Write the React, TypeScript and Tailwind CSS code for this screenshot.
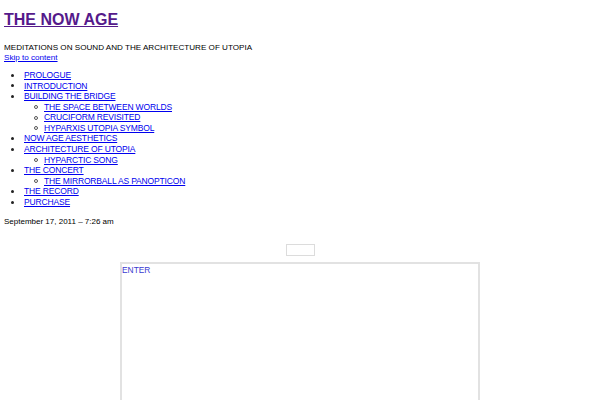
const nav: { label: string; children?: string[] }[] = [
  { label: "PROLOGUE" },
  { label: "INTRODUCTION" },
  {
    label: "BUILDING THE BRIDGE",
    children: ["THE SPACE BETWEEN WORLDS", "CRUCIFORM REVISITED", "HYPARXIS UTOPIA SYMBOL"],
  },
  { label: "NOW AGE AESTHETICS" },
  { label: "ARCHITECTURE OF UTOPIA", children: ["HYPARCTIC SONG"] },
  { label: "THE CONCERT", children: ["THE MIRRORBALL AS PANOPTICON"] },
  { label: "THE RECORD" },
  { label: "PURCHASE" },
];

const link = "text-[#0000ee] underline";

export default function App() {
  return (
    <div className="h-[400px] overflow-hidden bg-white px-[4px] font-['Liberation_Sans',Arial,sans-serif] text-[8.5px] leading-[10.58px] tracking-[-0.15px] text-black">
      <header className="pt-[10px]">
        <h1 className="text-[16px] leading-[19px] font-bold tracking-normal">
          <a href="#" className="text-[#551a8b] underline">
            THE NOW AGE
          </a>
        </h1>
        <p className="mt-[14px] text-[8.1px] leading-[10px] tracking-normal">
          MEDITATIONS ON SOUND AND THE ARCHITECTURE OF UTOPIA
        </p>
        <a href="#" className={`block text-[8.1px] leading-[10px] tracking-normal ${link}`}>
          Skip to content
        </a>
      </header>

      <ul className="mt-[7px] pl-[6.5px]">
        {nav.map((item) => (
          <li key={item.label}>
            <div className="flex items-center">
              <span className="mr-[10.5px] h-[3px] w-[3px] shrink-0 rounded-full bg-[#222]" />
              <a href="#" className={link}>
                {item.label}
              </a>
            </div>
            {item.children && (
              <ul className="pl-[23.5px]">
                {item.children.map((c) => (
                  <li key={c} className="flex items-center">
                    <span className="mr-[6px] h-[4px] w-[4px] shrink-0 rounded-full border border-[#555]" />
                    <a href="#" className={link}>
                      {c}
                    </a>
                  </li>
                ))}
              </ul>
            )}
          </li>
        ))}
      </ul>

      <p className="mt-[9px] text-[8px] leading-[10px] tracking-normal">September 17, 2011 – 7:26 am</p>

      <div className="mt-[17px] flex flex-col items-center">
        <div className="h-[12px] w-[29px] border border-[#dcdcdc]" />
        <div className="mt-[6px] h-[150px] w-[360px] border-2 border-[#e2e2e2] pt-[1px]">
          <span className="block text-[8.4px] leading-[10px] tracking-normal text-[#3a3ad0]">ENTER</span>
        </div>
      </div>
    </div>
  );
}
